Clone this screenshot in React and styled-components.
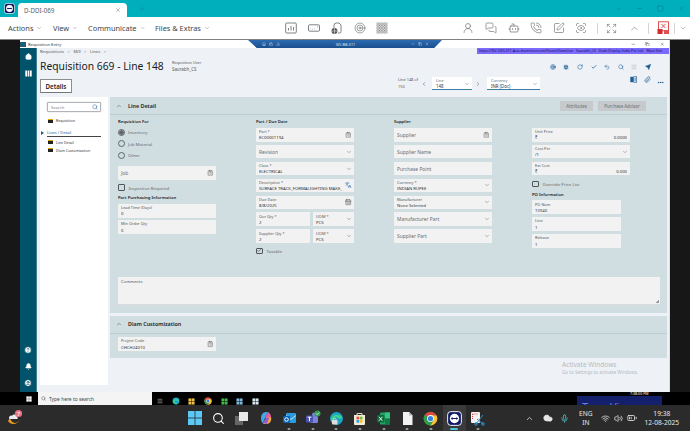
import React from 'react';
import styled, { createGlobalStyle } from 'styled-components';
import {
  ChevronDown, ChevronUp, ChevronLeft, ChevronRight, X, Plus, Minus, Copy, Home, Search, Lock, ChartNoAxesColumn,
  Save, RotateCw, Check, Undo2, Send, Paperclip, HelpCircle, Bell, CircleUser, ClipboardList, Languages,
  CalendarDays, MoreHorizontal, Target, MessagesSquare, Bot, PhoneCall, SquarePen, ScanEye,
  Expand, Wifi, Volume2, BatteryMedium, Cloud, Mic, Square as SquareIcon, Menu, UserRound
} from 'lucide-react';

const Global = createGlobalStyle`
  html, body { margin: 0; padding: 0; width: 690px; height: 431px; overflow: hidden; background: #171717; }
  * { box-sizing: border-box; }
  body { font-family: "Noto Sans", "Open Sans", sans-serif; }
`;

const Page = styled.div`width:690px;height:431px;display:flex;flex-direction:column;overflow:hidden;position:relative;`;
const TabBar = styled.div`height:17px;background:#00afbc;display:flex;align-items:flex-end;flex:none;`;
const AppLogo = styled.div`width:18px;height:17px;display:flex;align-items:center;justify-content:center;padding-bottom:1px;`;
const Tab = styled.div`width:109px;height:14px;background:#fff;border-radius:4px 4px 0 0;display:flex;align-items:center;justify-content:space-between;padding:0 6px;font-size:6.2px;color:#5a6268;`;
const NewTab = styled.div`margin-left:11px;height:16px;color:#1a8e9c;display:flex;align-items:center;`;
const WinBtns = styled.div`margin-left:auto;height:17px;display:flex;align-items:center;gap:14px;padding-right:5px;color:#0b6d78;`;

const Toolbar = styled.div`height:23px;background:#fff;border-bottom:1px solid #7e8285;display:flex;align-items:center;flex:none;color:#555;`;
const MenuItem = styled.div`display:flex;align-items:center;gap:3px;font-size:7.4px;color:#404548;margin-left:${p => p.$first ? 8 : 10}px;width:${p => p.$w}px;white-space:nowrap;`;
const IconGroup = styled.div`display:flex;align-items:center;gap:${p => p.$gap ?? 10.6}px;margin-left:${p => p.$ml}px;color:#5e6265;`;
const VLine = styled.div`width:1px;height:11px;background:#d5d5d5;margin-left:${p => p.$ml}px;`;

const Remote = styled.div`flex:none;height:365px;background:#171717;display:flex;flex-direction:column;`;
const RemoteTop = styled.div`height:352px;display:flex;flex:none;padding-left:20px;`;
const Win = styled.div`width:650px;height:352px;background:#eef2f7;display:flex;flex-direction:column;position:relative;border-right:1px solid #ddd;`;
const TitleBar = styled.div`height:8px;background:#fff;display:flex;align-items:center;flex:none;position:relative;`;
const TitleIcon = styled.div`width:6px;height:5px;background:#1e5c78;margin-right:2px;`;
const TitleText = styled.div`font-size:4.2px;color:#333;`;
const RemoteBlue = styled.div`position:absolute;left:228px;top:0;width:194px;height:8px;background:linear-gradient(#2c6bb0,#1a4f8f);clip-path:polygon(0 0,100% 0,96% 100%,4.5% 100%);display:flex;align-items:center;justify-content:space-between;padding:0 13px 0 14px;color:#dfeaf6;font-size:3.8px;`;
const BlueIcons = styled.div`display:flex;gap:3px;align-items:center;`;
const WinCtl = styled.div`margin-left:auto;display:flex;gap:10px;padding-right:5px;color:#333;align-items:center;`;
const Purple = styled.div`position:absolute;right:0;top:8px;width:192px;height:6px;background:#7c6bfa;color:#10105a;font-size:3.6px;line-height:6px;white-space:nowrap;overflow:hidden;padding-left:2px;`;

const Body = styled.div`flex:1;display:flex;min-height:0;`;
const Rail = styled.div`width:17px;background:#00536b;display:flex;flex-direction:column;align-items:center;padding:5px 0 5px;color:#fff;flex:none;border-right:1px solid #3f7f92;`;
const RailTop = styled.div`display:flex;flex-direction:column;gap:10px;align-items:center;margin-bottom:auto;`;
const RailBottom = styled.div`display:flex;flex-direction:column;gap:9px;align-items:center;`;
const Main = styled.div`flex:1;display:flex;flex-direction:column;padding-left:3px;min-width:0;`;

const Head = styled.div`height:49px;flex:none;display:flex;flex-direction:column;position:relative;`;
const Crumbs = styled.div`font-size:4.2px;color:#555;height:7px;line-height:7px;word-spacing:2.4px;`;
const TitleRow = styled.div`display:flex;align-items:center;height:16px;margin-top:3px;`;
const PageTitle = styled.h1`margin:0;font-size:10.3px;font-weight:400;color:#1b1b1b;width:132px;white-space:nowrap;line-height:16px;`;
const UserBox = styled.div`font-size:3.8px;line-height:6px;color:#555;& b{display:block;font-weight:400;font-size:4.4px;}`;
const DetailsTab = styled.div`width:32px;height:14px;margin-top:5px;background:#fff;border:1px solid #8d8d8d;border-bottom:1.5px solid #777;font-size:6.2px;font-weight:600;color:#222;display:flex;align-items:center;justify-content:center;`;
const Tools = styled.div`position:absolute;right:18px;top:15.5px;display:flex;gap:7.6px;color:#1d5d92;`;
const Tools2 = styled.div`position:absolute;right:18px;top:28px;display:flex;gap:7px;color:#1d5d92;`;
const Dots = styled.div`position:absolute;right:5px;top:21px;color:#1d5d92;`;
const LineNav = styled.div`position:absolute;left:358px;top:29px;height:13px;display:flex;align-items:center;color:#555;`;
const LineOf = styled.div`font-size:3.9px;line-height:6.5px;width:23px;color:#555;`;
const Drop = styled.div`width:${p => p.$w}px;height:13px;background:#fff;border-bottom:1px solid #3c7ea6;padding:1px 2px 0 4px;position:relative;margin:0 ${p => p.$mr ?? 0}px 0 ${p => p.$ml ?? 0}px;& small{display:block;font-size:3.9px;line-height:5px;color:#666;}& span{display:block;font-size:4.4px;line-height:6px;color:#333;}& svg{position:absolute;right:2px;bottom:2px;color:#3a6d96;}`;

const Columns = styled.div`flex:1;display:flex;gap:2px;min-height:0;`;
const NavPanel = styled.div`width:68px;height:288px;background:#fff;padding:5px 7px 0 7px;flex:none;position:relative;`;
const SearchBox = styled.div`height:10px;border:1px solid #b0b4b8;border-radius:1px;display:flex;align-items:center;justify-content:space-between;padding:0 2px 0 3px;font-size:4.2px;color:#888;box-shadow:0 0 1px #888;& svg{color:#2f6f9f;}`;
const NavRow = styled.div`display:flex;align-items:center;gap:3px;margin:${p => p.$mt ?? 0}px 0 0 1px;font-size:3.6px;color:#333;height:7px;white-space:nowrap;`;
const NavIcon = styled.i`display:block;width:5px;height:4px;background:#222;border-top:1px solid #e0a800;flex:none;`;
const NavActive = styled.div`margin-top:5px;height:8px;border-bottom:1px solid #444;font-size:4px;color:#1d5d92;line-height:7px;position:relative;&::before{content:"";position:absolute;left:-6px;top:1.5px;border-left:3px solid #1d5d92;border-top:2.5px solid transparent;border-bottom:2.5px solid transparent;}`;

const Content = styled.div`width:557px;flex:none;display:flex;flex-direction:column;gap:3px;`;
const Section = styled.section`background:#d0dde1;height:${p => p.$h}px;flex:none;`;
const SecHead = styled.div`height:${p => p.$h}px;border-bottom:1px solid #b9cfd4;display:flex;align-items:center;padding-left:6px;gap:6px;color:#1d5d92;`;
const SecTitle = styled.div`font-size:5.4px;font-weight:600;color:#1c1c1c;`;
const SecBtns = styled.div`margin-left:auto;margin-right:21px;display:flex;gap:5px;`;
const GrayBtn = styled.div`width:${p => p.$w}px;height:10px;background:#c6cacc;font-size:4.4px;color:#6b6f72;display:flex;align-items:center;justify-content:center;`;
const Grid = styled.div`display:grid;grid-template-columns:repeat(4,98px);column-gap:40px;padding:3px 0 0 8px;height:162px;`;
const Stack = styled.div`display:flex;flex-direction:column;gap:3.3px;`;
const Heading = styled.div`font-size:4.2px;font-weight:600;color:#1f1f1f;height:7px;line-height:7px;white-space:nowrap;margin-bottom:${p => p.$mb ?? 0}px;margin-top:${p => p.$mt ?? 0}px;`;
const TopPad = styled.div`height:10px;`;
const Radio = styled.div`display:flex;align-items:center;gap:3px;font-size:4.3px;color:#6a6a6a;height:8px;margin-top:${p => p.$mt ?? 0}px;`;
const RadioDot = styled.i`display:block;width:7px;height:7px;border:1px solid #5c6468;border-radius:50%;background:${p => p.$on ? 'radial-gradient(circle,#666 0 2px,#c4cdd0 2.4px)' : 'transparent'};`;
const CheckRow = styled.div`display:flex;align-items:center;gap:4px;font-size:4.3px;color:#6a6a6a;height:8px;margin-top:${p => p.$mt ?? 0}px;`;
const CheckBoxBox = styled.i`display:flex;width:6.5px;height:6.5px;border:1px solid #4e5659;border-radius:1px;align-items:center;justify-content:center;color:#333;flex:none;`;
const FieldBox = styled.div`width:${p => p.$w ?? '100%'};height:${p => p.$h ?? 13.6}px;background:#f2f2f2;padding:0 3px;display:flex;flex-direction:column;justify-content:center;position:relative;flex:none;margin-top:${p => p.$mt ?? 0}px;`;
const FLabel = styled.div`font-size:3.9px;line-height:5.2px;color:#555;white-space:nowrap;`;
const FValue = styled.div`font-size:4.25px;line-height:6px;color:#333;white-space:nowrap;overflow:hidden;display:flex;justify-content:space-between;padding-right:8px;`;
const FPlaceholder = styled.div`font-size:4.9px;color:#6c6c6c;white-space:nowrap;`;
const FAdorn = styled.div`position:absolute;right:2.5px;top:50%;transform:translateY(-50%);color:${p => p.$c ?? '#555'};display:flex;`;
const HalfRow = styled.div`display:grid;grid-template-columns:54px 41px;gap:3px;`;
const NarrowStack = styled(Stack)`width:89px;`;
const Comments = styled.div`margin:0 7px 0 8px;height:28px;background:#f2f2f2;padding:1.5px 3px;font-size:4.2px;color:#555;border-bottom:1px solid #dcdcdc;position:relative;&::after{content:"";position:absolute;right:1px;bottom:1px;width:3px;height:3px;background:linear-gradient(135deg,transparent 50%,#999 50%);}`;
const Body2 = styled.div`padding:3.5px 0 0 8px;`;
const Watermark = styled.div`position:absolute;left:542px;top:321px;font-size:4.6px;color:#b4bac0;line-height:7px;white-space:nowrap;& b{display:block;font-weight:400;font-size:6.6px;line-height:8px;}`;

const RemoteBar = styled.div`height:13px;background:#000;display:flex;align-items:flex-start;padding-left:20px;position:relative;overflow:hidden;flex:none;`;
const RStart = styled.div`width:18px;height:13px;display:flex;align-items:center;justify-content:center;`;
const RSearch = styled.div`width:114px;height:13px;background:#f4f4f4;display:flex;align-items:center;gap:3px;padding-left:3px;font-size:4.9px;color:#444;`;
const RIcons = styled.div`display:flex;align-items:center;gap:8.7px;padding:5px 0 0 5px;`;
const Popup = styled.div`position:absolute;left:577px;top:4px;width:85px;height:12px;background:#14206b;color:#6b7fc6;font-size:11px;padding:4px 5px 0;line-height:13px;white-space:nowrap;overflow:hidden;`;
const Clock7 = styled.div`position:absolute;left:630px;top:0;color:#fff;font-size:3.6px;line-height:4px;white-space:nowrap;`;

const Taskbar = styled.div`height:26px;background:#2b2b2b;flex:none;display:flex;align-items:center;color:#fff;position:relative;`;
const Widget = styled.div`width:20px;margin-left:7px;display:flex;`;
const Apps = styled.div`display:flex;margin-left:156px;`;
const AppCell = styled.div`width:23.6px;height:26px;display:flex;align-items:center;justify-content:center;position:relative;background:${p => p.$active ? '#3a3a3a' : 'transparent'};&::after{content:${p => p.$dot ? '""' : 'none'};position:absolute;bottom:1.5px;left:50%;transform:translateX(-50%);width:${p => p.$active ? 8 : 3}px;height:1.5px;border-radius:1px;background:${p => p.$active ? '#49c6d8' : '#999'};}`;
const Tray = styled.div`position:relative;margin-left:auto;display:flex;align-items:center;height:26px;padding-right:11px;color:#e8e8e8;`;
const TrayIcon = styled.div`display:flex;margin-left:${p => p.$ml}px;color:${p => p.$c ?? '#e6e6e6'};`;
const TwoLine = styled.div`font-size:6.6px;line-height:9px;text-align:center;margin-left:${p => p.$ml}px;white-space:nowrap;color:#e8e8e8;`;

const TVLogo = ({ s = 12 }) => (
  <svg width={s} height={s} viewBox="0 0 24 24">
    <rect x="1" y="1" width="22" height="22" rx="5" fill="#101a66" stroke="#fff" strokeWidth="1.5" />
    <circle cx="12" cy="12" r="7.5" fill="#fff" />
    <path d="M6 12l3-2.4v1.5h6V9.6l3 2.4-3 2.4v-1.5H9v1.5z" fill="#101a66" />
  </svg>
);
const WinLogo = ({ s = 16, c = '#5cc8f5' }) => (
  <svg width={s} height={s} viewBox="0 0 16 16"><g fill={c}><rect x="1" y="1" width="6.6" height="6.6" /><rect x="8.4" y="1" width="6.6" height="6.6" /><rect x="1" y="8.4" width="6.6" height="6.6" /><rect x="8.4" y="8.4" width="6.6" height="6.6" /></g></svg>
);
const SolidColumns = () => (
  <svg width="7" height="7" viewBox="0 0 7 7" fill="#fff"><rect x=".3" y=".5" width="1.7" height="6" /><rect x="2.65" y=".5" width="1.7" height="6" /><rect x="5" y=".5" width="1.7" height="6" /></svg>
);
const BookIcon = () => (
  <svg width="7" height="7" viewBox="0 0 7 7"><rect x=".3" y=".8" width="3" height="5.4" fill="#1d5d92" /><rect x="3.7" y=".8" width="3" height="5.4" fill="none" stroke="#1d5d92" strokeWidth=".7" /><path d="M4.4 2.3h1.6M4.4 3.5h1.6M4.4 4.7h1.6" stroke="#1d5d92" strokeWidth=".5" /></svg>
);
const WeatherIcon = () => (
  <svg width="18" height="18" viewBox="0 0 18 18">
    <path d="M3 9c1 5 6 7 10 2-2 4-9 6-12 1z" fill="#f09a20" />
    <path d="M2 9c0-2 2-3 3-2 1-2 5-2 5 1 1 0 1 2 0 2H3C2 10 2 9 2 9z" fill="#e9eef3" />
    <circle cx="11.5" cy="4.5" r="3.6" fill="#e87486" />
    <text x="11.5" y="6.5" fontSize="5.5" fontFamily="Noto Sans" fill="#fff" textAnchor="middle">7</text>
  </svg>
);
const TaskView = () => (
  <svg width="15" height="15" viewBox="0 0 15 15"><rect x="1" y="5" width="8" height="9" fill="#666" /><rect x="5" y="1" width="9" height="9" fill="#e8e8e8" /></svg>
);
const CopilotIcon = () => (
  <svg width="14" height="14" viewBox="0 0 14 14"><path d="M2 7c0-3 2-6 5-6h2L6 7l-2 5C3 12 2 10 2 7z" fill="#3fa6e8" /><path d="M9 1c2 1 3 3 3 5l-3 1-3 0z" fill="#e85ca0" /><path d="M12 6c1 3-1 7-4 7H4l3-6z" fill="#f5a63c" /><path d="M4 12l3-5 3 0-2 6z" fill="#8a5fd8" /></svg>
);
const OutlookIcon = () => (
  <svg width="15" height="15" viewBox="0 0 15 15"><rect x="4" y="2" width="10" height="10" rx="1" fill="#2b9be0" /><path d="M4 4l5 4 5-4v1L9 9 4 5z" fill="#bfe6fa" /><rect x="1" y="5" width="7" height="7" rx="1" fill="#0b5fb0" /><circle cx="4.5" cy="8.5" r="1.8" fill="none" stroke="#fff" strokeWidth="1" /></svg>
);
const TeamsIcon = () => (
  <svg width="16" height="16" viewBox="0 0 16 16"><rect x="5" y="6" width="8" height="7" rx="1.5" fill="#7b83d8" /><circle cx="9" cy="4.5" r="2" fill="#7b83d8" /><rect x="1" y="5.5" width="7" height="7" rx="1" fill="#4d53b5" /><path d="M2.7 7.2h3.6M4.5 7.2v4" stroke="#fff" strokeWidth="1" /><circle cx="12.5" cy="3.5" r="3" fill="#2e9e50" /><path d="M11 3.5l1.1 1.1L14 2.7" stroke="#fff" strokeWidth=".8" fill="none" /></svg>
);
const EdgeIcon = ({ s = 15, lock = true }) => (
  <svg width={s} height={s} viewBox="0 0 15 15"><circle cx="7.5" cy="7.5" r="6.5" fill="#1aa5c8" /><path d="M2 9c0-5 7-7 11-3 0 2-3 2-4 1-2-2-5 0-3 4 1 2 3 2 4 2-3 1-7 0-8-4z" fill="#3fcf8e" />{lock && <g><rect x="3" y="9" width="5.5" height="4.5" rx=".7" fill="#ddd" /><circle cx="5.7" cy="8.7" r="1.4" fill="none" stroke="#ddd" strokeWidth=".8" /></g>}</svg>
);
const StoreIcon = () => (
  <svg width="15" height="15" viewBox="0 0 15 15"><path d="M2 4h11v9a1 1 0 0 1-1 1H3a1 1 0 0 1-1-1z" fill="#f2ead9" /><path d="M5 4V2.5h5V4" stroke="#e0d8c6" fill="none" /><rect x="4.5" y="5.7" width="2.7" height="2.7" fill="#e8503c" /><rect x="7.8" y="5.7" width="2.7" height="2.7" fill="#6fbf3c" /><rect x="4.5" y="9" width="2.7" height="2.7" fill="#2f9fe8" /><rect x="7.8" y="9" width="2.7" height="2.7" fill="#f5c020" /></svg>
);
const ExcelIcon = () => (
  <svg width="15" height="15" viewBox="0 0 15 15"><rect x="4" y="1.5" width="10" height="12" rx="1" fill="#21a366" /><rect x="9" y="1.5" width="5" height="6" fill="#33c481" /><rect x="9" y="7.5" width="5" height="6" fill="#107c41" /><rect x="1" y="4" width="7.5" height="7.5" rx="1" fill="#0e6b38" /><path d="M3 5.8l3.4 4M6.4 5.8l-3.4 4" stroke="#fff" strokeWidth=".9" /></svg>
);
const PageIcon = () => (
  <svg width="13" height="15" viewBox="0 0 13 15"><path d="M2 1h6l3.5 3.5V14H2z" fill="#f2f2f2" /><path d="M8 1v3.5h3.5" fill="#bbb" /></svg>
);
const ChromeIcon = ({ s = 15 }) => (
  <svg width={s} height={s} viewBox="0 0 24 24"><circle cx="12" cy="12" r="11" fill="#dd4b3e" /><path d="M12 12L2.5 6.5A11 11 0 0 0 12 23l5-8z" fill="#2f9e48" /><path d="M12 7h9.6A11 11 0 0 1 12 23l5-8z" fill="#f7c52d" /><circle cx="12" cy="12" r="5.5" fill="#fff" /><circle cx="12" cy="12" r="4.2" fill="#3a7fe0" /></svg>
);
const SnipIcon = () => (
  <svg width="15" height="15" viewBox="0 0 15 15"><rect x="1" y="1" width="9" height="11" rx="1" fill="#f2f2f2" /><path d="M2.5 3h6" stroke="#d63a3a" strokeWidth="1" strokeDasharray="1 1" /><path d="M2.5 3v6" stroke="#d63a3a" strokeWidth="1" strokeDasharray="1 1" /><path d="M6 13l7-9M7 8l6 5" stroke="#2f8fd0" strokeWidth="1" /><circle cx="6" cy="13" r="1.3" fill="none" stroke="#2f8fd0" /><circle cx="13" cy="13" r="1.3" fill="none" stroke="#2f8fd0" /></svg>
);
const BarsBox = () => (
  <svg width="12" height="12" viewBox="0 0 12 12" fill="none" stroke="currentColor" strokeWidth=".8"><rect x=".7" y="1" width="10.6" height="10" rx="1" /><path d="M3.5 8.5V6M6 8.5V4M8.5 8.5V5" /></svg>
);
const CardDots = () => (
  <svg width="12" height="12" viewBox="0 0 12 12" fill="none" stroke="currentColor" strokeWidth=".8"><rect x=".5" y="2.8" width="11" height="6.4" rx="1" /><path d="M2.4 7h.5M4.2 7h.5M6 7h.5M9 4.8h.8" /></svg>
);
const FileGlobe = () => (
  <svg width="13" height="13" viewBox="0 0 13 13" fill="none" stroke="currentColor" strokeWidth=".8"><path d="M4 6V3.5A2.5 2.5 0 0 1 6.5 1H9l2 2v6.5A1.5 1.5 0 0 1 9.5 11H8" /><circle cx="4.5" cy="9" r="3" fill="#555" stroke="none" /><path d="M1.5 9h6M4.5 6v6" stroke="#fff" strokeWidth=".5" /></svg>
);
const Hatched = () => (
  <svg width="12" height="12" viewBox="0 0 12 12"><defs><pattern id="hx" width="1.6" height="1.6" patternUnits="userSpaceOnUse"><rect width=".8" height=".8" fill="#666" /><rect x=".8" y=".8" width=".8" height=".8" fill="#888" /></pattern></defs><rect x="0.5" y="0.5" width="11" height="11" fill="url(#hx)" /></svg>
);
const RedScreen = () => (
  <svg width="13" height="14" viewBox="0 0 13 14" fill="none"><rect x="1.5" y=".8" width="10" height="9" stroke="#d92a2a" strokeWidth=".8" /><path d="M4.5 3l4 4M8.5 3l-4 4" stroke="#d92a2a" strokeWidth=".8" /><rect x=".5" y="8" width="5" height="5" fill="#d92a2a" /><rect x="7" y="9" width="5" height="4" fill="#e05050" /></svg>
);

const F = ({ label, value, ph, adorn, adornColor, w, mt, h }) => (
  <FieldBox $w={w} $mt={mt} $h={h}>
    {label && <FLabel>{label}</FLabel>}
    {value != null && <FValue>{value}</FValue>}
    {ph && <FPlaceholder>{ph}</FPlaceholder>}
    {adorn && <FAdorn $c={adornColor}>{adorn}</FAdorn>}
  </FieldBox>
);
const Chev = <ChevronDown size={6} strokeWidth={1.6} />;
const Clip = <ClipboardList size={6.5} strokeWidth={1.8} />;

const NumValue = styled(FValue)`padding-right:0;`;
const Price = ({ label, cur, amount }) => (
  <FieldBox><FLabel>{label}</FLabel><NumValue><span>{cur}</span><span>{amount}</span></NumValue></FieldBox>
);

export default function App() {
  return (
    <Page>
      <Global />
      <TabBar>
        <AppLogo><TVLogo s={11} /></AppLogo>
        <Tab><span>D-DDI-069</span><X size={6} color="#777" /></Tab>
        <NewTab><Plus size={8} strokeWidth={1.6} /></NewTab>
        <WinBtns>
          <ChevronDown size={6} strokeWidth={1.5} />
          <Minus size={7} strokeWidth={1.5} />
          <SquareIcon size={7} strokeWidth={1.3} />
          <X size={7} strokeWidth={1.4} />
        </WinBtns>
      </TabBar>

      <Toolbar>
        <MenuItem $first $w={35}>Actions <ChevronDown size={6} color="#888" /></MenuItem>
        <MenuItem $w={25}>View <ChevronDown size={6} color="#888" /></MenuItem>
        <MenuItem $w={57}>Communicate <ChevronDown size={6} color="#888" /></MenuItem>
        <MenuItem $w={55}>Files &amp; Extras <ChevronDown size={6} color="#888" /></MenuItem>
        <IconGroup $ml={75}>
          <BarsBox /><CardDots /><FileGlobe /><Target size={12} strokeWidth={1.2} /><Hatched />
        </IconGroup>
        <IconGroup $ml={74}>
          <UserRound size={12} strokeWidth={1.2} /><MessagesSquare size={12} strokeWidth={1.2} /><Bot size={12} strokeWidth={1.3} /><PhoneCall size={12} strokeWidth={1.2} /><SquarePen size={12} strokeWidth={1.2} /><ScanEye size={12} strokeWidth={1.2} />
        </IconGroup>
        <VLine $ml={10} />
        <IconGroup $ml={8}><Expand size={11} strokeWidth={1.1} /></IconGroup>
        <IconGroup $ml={12}><ChevronUp size={11} strokeWidth={1.2} /></IconGroup>
        <VLine $ml={8} />
        <IconGroup $ml={8}><RedScreen /></IconGroup>
        <VLine $ml={4} />
        <IconGroup $ml={4}><ChevronDown size={8} strokeWidth={1.2} /></IconGroup>
      </Toolbar>

      <Remote>
        <RemoteTop>
          <Win>
            <TitleBar>
              <TitleIcon />
              <TitleText>Requisition Entry</TitleText>
              <RemoteBlue>
                <BlueIcons><Home size={4} /><Lock size={4} /><ChartNoAxesColumn size={4} /></BlueIcons>
                <span>SIV-BB-011</span>
                <BlueIcons><Minus size={4} /><Copy size={4} /><X size={4} /></BlueIcons>
              </RemoteBlue>
              <WinCtl><Minus size={4.5} /><Copy size={4.5} /><X size={4.5} /></WinCtl>
            </TitleBar>
            <Purple>https://SIV-DDI-011.Asia.diamintor.com/KineticDiamLive &nbsp; Saurabh_CS &nbsp; Diakt Display India Pvt Ltd. &nbsp; Main Site</Purple>
            <Body>
              <Rail>
                <RailTop><Home size={7} fill="#fff" /><SolidColumns /></RailTop>
                <RailBottom><HelpCircle size={8} fill="#fff" stroke="#00536b" /><Bell size={7} fill="#fff" /><CircleUser size={8} fill="#fff" stroke="#00536b" /></RailBottom>
              </Rail>
              <Main>
                <Head>
                  <Crumbs>Requisitions &gt; 669 &gt; Lines &gt;</Crumbs>
                  <TitleRow>
                    <PageTitle>Requisition 669 - Line 148</PageTitle>
                    <UserBox>Requisition User<b>Saurabh_CS</b></UserBox>
                  </TitleRow>
                  <DetailsTab>Details</DetailsTab>
                  <Tools>
                    <Target size={6} /><Save size={6} fill="#1d5d92" stroke="#fff" /><RotateCw size={6} /><Check size={6} strokeWidth={3} /><Undo2 size={6} /><Search size={6} /><Menu size={6} color="#aaa" /><Send size={6} fill="#1d5d92" />
                  </Tools>
                  <Dots><MoreHorizontal size={7} strokeWidth={3} /></Dots>
                  <Tools2><BookIcon /><Paperclip size={7} /></Tools2>
                  <LineNav>
                    <LineOf>Line 148 of<br />150</LineOf>
                    <ChevronLeft size={6} />
                    <Drop $w={40} $ml={5} $mr={3}><small>Line</small><span>148</span>{Chev}</Drop>
                    <ChevronRight size={6} />
                    <Drop $w={53} $ml={6}><small>Currency</small><span>INR (Doc)</span>{Chev}</Drop>
                  </LineNav>
                </Head>
                <Columns>
                  <NavPanel>
                    <SearchBox>Search<Search size={6} /></SearchBox>
                    <NavRow $mt={5}><NavIcon />Requisition</NavRow>
                    <NavActive>Lines / Detail</NavActive>
                    <NavRow $mt={1.5}><NavIcon />Line Detail</NavRow>
                    <NavRow $mt={1}><NavIcon />Diam Customization</NavRow>
                  </NavPanel>
                  <Content>
                    <Section $h={216}>
                      <SecHead $h={18}>
                        <ChevronUp size={6} strokeWidth={2} />
                        <SecTitle>Line Detail</SecTitle>
                        <SecBtns><GrayBtn $w={33}>Attributes</GrayBtn><GrayBtn $w={48}>Purchase Advisor</GrayBtn></SecBtns>
                      </SecHead>
                      <Grid>
                        <div>
                          <Heading>Requisition For</Heading>
                          <Radio $mt={3}><RadioDot $on />Inventory</Radio>
                          <Radio $mt={3.5}><RadioDot />Job Material</Radio>
                          <Radio $mt={3.5}><RadioDot />Other</Radio>
                          <F ph="Job" adorn={Clip} mt={7} />
                          <CheckRow $mt={4}><CheckBoxBox />Inspection Required</CheckRow>
                          <Heading $mt={2}>Part Purchasing Information</Heading>
                          <F label="Lead Time (Days)" value="0" mt={3} h={14} />
                          <F label="Min Order Qty" value="0" mt={2.5} h={14} />
                        </div>
                        <div>
                          <Heading $mb={3}>Part / Due Date</Heading>
                          <Stack>
                            <F label="Part *" value="EC00001194" adorn={Clip} />
                            <F ph="Revision" adorn={Chev} />
                            <F label="Class *" value="ELECTRICAL" adorn={Chev} />
                            <F label="Description *" value="SURFACE TRACK_FORMALIGHTING MAKE_" adorn={<Languages size={6.5} />} adornColor="#2a6ea8" />
                            <F label="Due Date" value="8/8/2025" adorn={<CalendarDays size={6.5} />} />
                            <HalfRow><F label="Our Qty *" value="2" /><F label="UOM *" value="PCS" adorn={Chev} /></HalfRow>
                            <HalfRow><F label="Supplier Qty *" value="2" /><F label="UOM *" value="PCS" adorn={Chev} /></HalfRow>
                          </Stack>
                          <CheckRow $mt={4}><CheckBoxBox><Check size={5} strokeWidth={3} /></CheckBoxBox>Taxable</CheckRow>
                        </div>
                        <div>
                          <Heading $mb={3}>Supplier</Heading>
                          <Stack>
                            <F ph="Supplier" adorn={Clip} />
                            <F ph="Supplier Name" />
                            <F ph="Purchase Point" />
                            <F label="Currency *" value="INDIAN RUPEE" adorn={Chev} />
                            <F label="Manufacturer" value="None Selected" adorn={Chev} />
                            <F ph="Manufacturer Part" adorn={Chev} />
                            <F ph="Supplier Part" adorn={Chev} />
                          </Stack>
                        </div>
                        <div>
                          <TopPad />
                          <Stack>
                            <Price label="Unit Price" cur="₹" amount="0.0000" />
                            <F label="Cost Per" value="/1" adorn={Chev} />
                            <Price label="Ext Cost" cur="₹" amount="0.000" />
                          </Stack>
                          <CheckRow $mt={4.5}><CheckBoxBox />Override Price List</CheckRow>
                          <Heading $mt={3.5}>PO Information</Heading>
                          <NarrowStack>
                            <F label="PO Num" value="15940" mt={2} />
                            <F label="Line" value="1" />
                            <F label="Release" value="1" />
                          </NarrowStack>
                        </div>
                      </Grid>
                      <Comments>Comments</Comments>
                    </Section>
                    <Section $h={42}>
                      <SecHead $h={17.5}>
                        <ChevronUp size={6} strokeWidth={2} />
                        <SecTitle>Diam Customization</SecTitle>
                      </SecHead>
                      <Body2><F label="Project Code" value="CHCH24010" adorn={Clip} w="98px" h={14} /></Body2>
                    </Section>
                  </Content>
                </Columns>
              </Main>
            </Body>
            <Watermark><b>Activate Windows</b>Go to Settings to activate Windows.</Watermark>
          </Win>
        </RemoteTop>
        <RemoteBar>
          <RStart><WinLogo s={6} c="#fff" /></RStart>
          <RSearch><Search size={5} />Type here to search</RSearch>
          <RIcons>
            <Menu size={6} color="#ddd" /><EdgeIcon s={8} lock={false} /><WinLogo s={7} c="#f0c040" /><ChromeIcon s={8} /><WinLogo s={7} c="#45b649" /><WinLogo s={7} c="#7fb8d8" /><WinLogo s={7} c="#d8e8f0" />
          </RIcons>
          <Clock7>7:38:00 PM</Clock7>
          <Popup>TeamViewer</Popup>
        </RemoteBar>
      </Remote>

      <Taskbar>
        <Widget><WeatherIcon /></Widget>
        <Apps>
          <AppCell><WinLogo /></AppCell>
          <AppCell><Search size={13} strokeWidth={2} /></AppCell>
          <AppCell><TaskView /></AppCell>
          <AppCell><CopilotIcon /></AppCell>
          <AppCell $dot><OutlookIcon /></AppCell>
          <AppCell $dot><TeamsIcon /></AppCell>
          <AppCell $dot><EdgeIcon /></AppCell>
          <AppCell $dot><StoreIcon /></AppCell>
          <AppCell $dot><ExcelIcon /></AppCell>
          <AppCell $dot><PageIcon /></AppCell>
          <AppCell $dot><ChromeIcon /></AppCell>
          <AppCell $dot $active><TVLogo s={15} /></AppCell>
          <AppCell $dot><SnipIcon /></AppCell>
        </Apps>
        <Tray>
          <TrayIcon $ml={0}><ChevronUp size={9} /></TrayIcon>
          <TrayIcon $ml={9}><Cloud size={10} fill="#e6e6e6" /></TrayIcon>
          <TrayIcon $ml={7} $c="#4fc4c8"><Mic size={9} /></TrayIcon>
          <TwoLine $ml={10}>ENG<br />IN</TwoLine>
          <TrayIcon $ml={8}><Wifi size={9} /></TrayIcon>
          <TrayIcon $ml={4}><Volume2 size={9} /></TrayIcon>
          <TrayIcon $ml={4}><BatteryMedium size={10} /></TrayIcon>
          <TwoLine $ml={8}>19:38<br />12-08-2025</TwoLine>
        </Tray>
      </Taskbar>
    </Page>
  );
}
